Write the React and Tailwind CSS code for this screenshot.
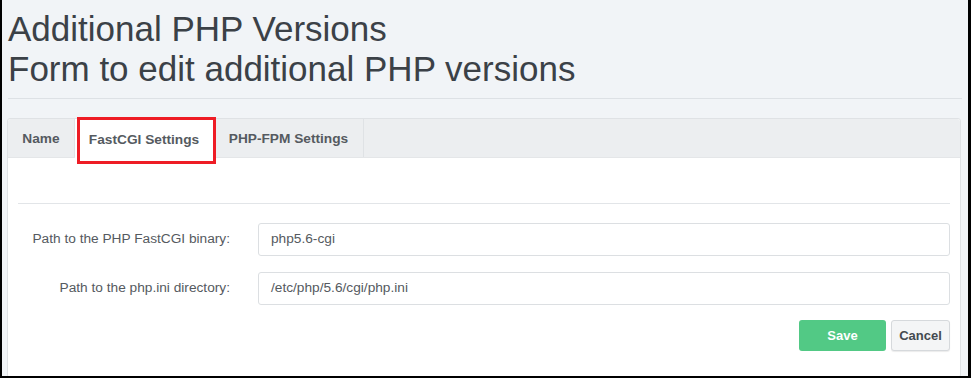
import React from "react";

const tabs = ["Name", "FastCGI Settings", "PHP-FPM Settings"];

const fields = [
  { label: "Path to the PHP FastCGI binary:", value: "php5.6-cgi" },
  { label: "Path to the php.ini directory:", value: "/etc/php/5.6/cgi/php.ini" },
];

export default function App() {
  return (
    <div
      className="w-[971px] h-[378px] overflow-hidden bg-[#f1f4f7] border-l-2 border-r-[3px] border-b-2 border-black"
      style={{ fontFamily: '"Liberation Sans", Arial, sans-serif' }}
    >
      {/* Header */}
      <div className="pl-[6px] pr-[6px] pt-[9px]">
        <h1 className="text-[35px] leading-[40px] text-[#3b4147] font-normal">
          Additional PHP Versions
          <br />
          Form to edit additional PHP versions
        </h1>
        <div className="mt-[9px] h-px bg-[#dde1e5]" />
      </div>

      {/* Panel */}
      <div className="mt-[19px] ml-[5px] mr-[7px] border border-[#dfe2e5] rounded-[3px] bg-white h-[260px]">
        <div className="relative flex h-[39px] bg-[#eceef0] border-b border-[#e4e6e8] rounded-t-[3px]">
          {tabs.map((t, i) => (
            <div
              key={t}
              className={
                "flex items-center justify-center pt-[2px] text-[13.7px] font-bold text-[#555a60] border-r border-[#dfe2e5] " +
                (i === 0 ? "w-[67px]" : i === 1 ? "w-[139px] bg-white h-[40px]" : "w-[150px]")
              }
            >
              {t}
            </div>
          ))}
          {/* red annotation box */}
          <div className="absolute left-[69px] top-[-2px] w-[139px] h-[47px] border-[3px] border-[#ee1c25]" />
        </div>

        <div className="px-[10px]">
          <div className="mt-[45px] h-px bg-[#e2e5e8]" />
          <div className="mt-[19px] flex flex-col gap-[16px]">
            {fields.map((f) => (
              <div key={f.label} className="flex items-center">
                <label className="w-[212px] text-right text-[13.7px] text-[#555a60]">{f.label}</label>
                <div className="ml-[28px] flex-1 h-[33px] border border-[#dcdfe2] rounded-[3px] flex items-center px-[12px] text-[13.7px] text-[#555a60]">
                  {f.value}
                </div>
              </div>
            ))}
          </div>
          <div className="mt-[15px] flex justify-end gap-[5px]">
            <button className="w-[87px] h-[31px] rounded-[3px] bg-[#52c985] text-white text-[13px] font-bold">
              Save
            </button>
            <button className="w-[59px] h-[31px] rounded-[3px] bg-[#f4f5f6] border border-[#d6d9dc] shadow-[0_1px_1px_rgba(0,0,0,0.08)] text-[#444a50] text-[13px] font-bold">
              Cancel
            </button>
          </div>
        </div>
      </div>
    </div>
  );
}
